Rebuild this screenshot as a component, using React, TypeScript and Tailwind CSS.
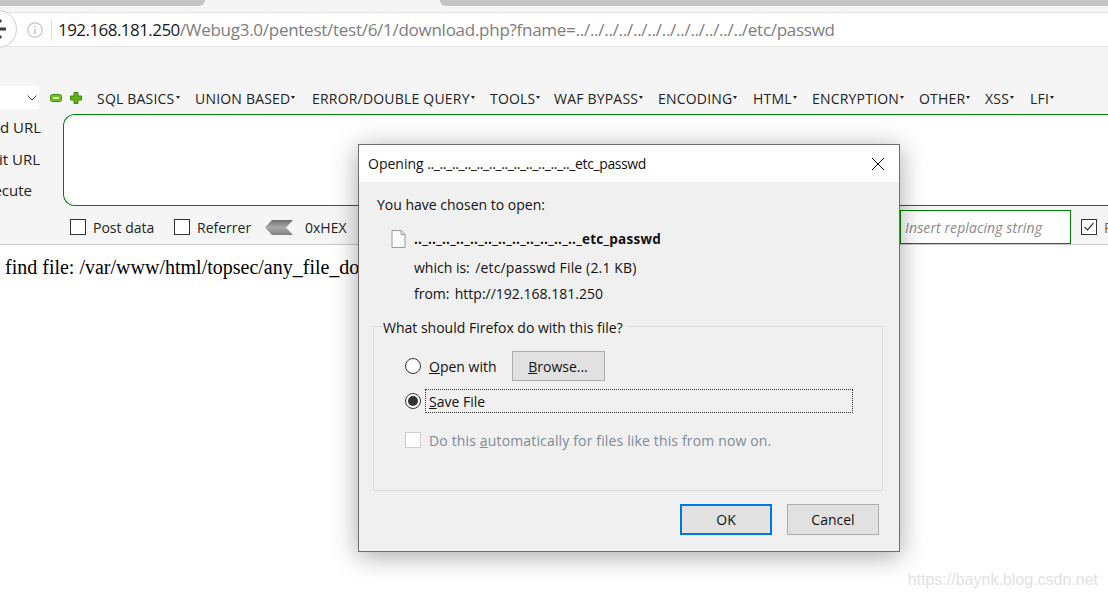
const menuItems = [
  { label: "SQL BASICS", width: "w-[98px]" },
  { label: "UNION BASED", width: "w-[117px]" },
  { label: "ERROR/DOUBLE QUERY", width: "w-[178px]" },
  { label: "TOOLS", width: "w-[64px]" },
  { label: "WAF BYPASS", width: "w-[104px]" },
  { label: "ENCODING", width: "w-[95px]" },
  { label: "HTML", width: "w-[59px]" },
  { label: "ENCRYPTION", width: "w-[107px]" },
  { label: "OTHER", width: "w-[66px]" },
  { label: "XSS", width: "w-[45px]" },
  { label: "LFI", width: "w-[32px]" },
];

function Radio({ checked }: { checked?: boolean }) {
  return (
    <span className="w-4 h-4 rounded-full border border-[#333] bg-white flex items-center justify-center shrink-0">
      {checked && <span className="w-2.5 h-2.5 rounded-full bg-[#333]" />}
    </span>
  );
}

function Check({ label, className }: { label: string; className: string }) {
  return (
    <div className={`flex items-center shrink-0 ${className}`}>
      <span className="w-4 h-4 border border-[#333] bg-white shrink-0" />
      <span className="ml-[7px] text-[14px] text-[#222]">{label}</span>
    </div>
  );
}

function Dialog() {
  return (
    <div className="absolute left-[358px] top-[144px] w-[542px] h-[408px] border border-[#6e6e6e] bg-[#f0f0f0] shadow-[0_4px_24px_rgba(0,0,0,0.35)] flex flex-col text-[14px] text-[#111]">
      <div className="h-[37px] bg-white flex items-center justify-between pl-[9px] pr-[13px] shrink-0">
        <span>
          Opening <span className="tracking-[-0.39px]">.._.._.._.._.._.._.._.._.._.._.._.._etc_passwd</span>
        </span>
        <svg className="w-4 h-4" viewBox="0 0 16 16" fill="none" stroke="#111" strokeWidth="1">
          <path d="M2 2l12 12M14 2L2 14" />
        </svg>
      </div>
      <div className="pl-[18px] pt-[13px] leading-[20px]">You have chosen to open:</div>
      <div className="flex items-center h-[20px] mt-[14px] pl-[32px]">
        <svg className="w-[15px] h-[18px]" viewBox="0 0 15 18" fill="#fbfbfb" stroke="#9a9a9a">
          <path d="M1 .5h9l4 4v13H1z" />
          <path d="M10 .5v4h4" fill="none" />
        </svg>
        <span className="ml-[8px] font-bold text-[13.5px] tracking-[0.25px]">.._.._.._.._.._.._.._.._.._.._.._.._etc_passwd</span>
      </div>
      <div className="pl-[55px] mt-[9px] leading-[20px]">
        which is:&nbsp;<span className="ml-[-2px] tracking-[0.15px]"> /etc/passwd File (2.1 KB)</span>
      </div>
      <div className="pl-[55px] mt-[6px] leading-[20px]">
        from:&nbsp;<span className="ml-[-2px]"> http://192.168.181.250</span>
      </div>
      <fieldset className="mx-[14px] mt-[12px] h-[175px] w-[510px] border border-[#dcdcdc] pl-[9px] shrink-0">
        <legend className="px-0 leading-[20px] pr-1 translate-y-[2px]">What should Firefox do with this file?</legend>
        <div className="flex items-center h-[30px] mt-[15px] pl-[22px]">
          <Radio />
          <span className="ml-2">
            <u>O</u>pen with
          </span>
          <button className="ml-[15px] w-[93px] h-[30px] border border-[#adadad] bg-[#e1e1e1]">
            <u>B</u>rowse...
          </button>
        </div>
        <div className="flex items-center h-[24px] mt-[8px] pl-[22px]">
          <Radio checked />
          <span className="ml-1 w-[428px] h-[24px] pl-[3px] leading-[23px] border border-dotted border-[#333]">
            <u>S</u>ave File
          </span>
        </div>
        <div className="flex items-center h-[16px] mt-[19px] pl-[22px] text-[#7f8a94]">
          <span className="w-4 h-4 border border-[#cfcfcf] bg-white shrink-0" />
          <span className="ml-2 tracking-[0.15px]">
            Do this <u>a</u>utomatically for files like this from now on.
          </span>
        </div>
      </fieldset>
      <div className="flex justify-end gap-[15px] pr-[20px] mt-[13px]">
        <button className="w-[92px] h-[31px] border-2 border-[#0078d7] bg-[#e1e1e1]">OK</button>
        <button className="w-[92px] h-[31px] border border-[#adadad] bg-[#e1e1e1]">Cancel</button>
      </div>
    </div>
  );
}

export default function App() {
  return (
    <div className="relative w-[1108px] h-[596px] overflow-hidden bg-white font-['Open_Sans','Noto_Sans',sans-serif]">
      {/* tab strip */}
      <div className="h-[12px] bg-[#f5f5f5] flex items-start">
        <div className="w-[205px] h-[6px] bg-[#c4c4c4] rounded-br-[8px]" />
        <div className="ml-[235px] flex-1 h-[6px] bg-[#c4c4c4] rounded-bl-[8px]" />
      </div>

      {/* url bar */}
      <div className="h-[35px] bg-white border-y border-[#e4e4e4] flex items-center pl-[27px] text-[17px] whitespace-nowrap">
        <svg className="w-4 h-4 shrink-0" viewBox="0 0 16 16" fill="none" stroke="#c4c4c4" strokeWidth="1.2">
          <circle cx="8" cy="8" r="7.2" />
          <path d="M8 7v5M8 4v1.6" strokeWidth="1.6" />
        </svg>
        <span className="ml-2 w-px h-[22px] bg-[#dcdcdc]" />
        <span className="ml-[6px] tracking-[-0.27px] text-[#7d7d7d]">
          <span className="text-[#1a1a1a] tracking-[-0.55px]">192.168.181.250</span>
          /Webug3.0/pentest/test/6/1/download.php?fname=../../../../../../../../../../../../etc/passwd
        </span>
      </div>

      {/* back button */}
      <div className="absolute left-[-21px] top-[10px] w-[38px] h-[38px] rounded-full bg-white border border-[#cfcfcf] flex items-center justify-end overflow-hidden">
        <svg className="w-[8px] h-[20px] mr-[9px]" viewBox="0 0 8 20" fill="none" stroke="#3c3c3c" strokeWidth="3">
          <path d="M0 2h2.500M0 10h7M0 18h2.500" />
        </svg>
      </div>

      {/* hackbar */}
      <div className="h-[198px] bg-[#f5f5f5] border-b border-[#c8c8c8] text-[14px] text-[#222] flex flex-col">
        <div className="flex items-center h-[23px] mt-[39px] whitespace-nowrap">
          <div className="w-[39px] h-[23px] bg-white flex items-center justify-end pr-[2px]">
            <svg className="w-[10px] h-[6px]" viewBox="0 0 10 6" fill="none" stroke="#555">
              <path d="M.5.5L5 5 9.5.5" />
            </svg>
          </div>
          <svg className="ml-[11px] w-[12px] h-[8px] shrink-0" viewBox="0 0 12 8">
            <rect x=".5" y=".5" width="11" height="7" rx="2" fill="#6fbf1a" stroke="#3f8a10" />
            <rect x="3" y="3" width="6" height="2" fill="#d8f2b0" />
          </svg>
          <svg className="ml-[8px] w-[12px] h-[12px] shrink-0" viewBox="0 0 12 12">
            <path d="M4 .5h4V4h3.500v4H8v3.500H4V8H.5V4H4z" fill="#5fb012" stroke="#3f8a10" strokeLinejoin="round" />
          </svg>
          <div className="ml-[15px] mt-[2px] flex">
            {menuItems.map((item) => (
              <div key={item.label} className={`${item.width} flex items-center tracking-[0.2px]`}>
                <span>{item.label}</span>
                <span className="ml-[1px] mt-[-2px] w-0 h-0 border-x-[2.500px] border-x-transparent border-t-[3px] border-t-[#222]" />
              </div>
            ))}
          </div>
        </div>

        <div className="flex mt-[5px]">
          <div className="w-[41px] h-[92px] flex flex-col justify-between pt-[2px] pb-[5px] overflow-hidden text-[15px]">
            <div className="flex justify-end whitespace-nowrap">Load URL</div>
            <div className="flex justify-end whitespace-nowrap pr-[1px] mt-[1px]">Split URL</div>
            <div className="flex justify-end whitespace-nowrap pr-[9px]">Execute</div>
          </div>
          <div className="ml-[22px] flex-1 h-[92px] bg-white border border-r-0 border-[#008000] rounded-l-[12px]" />
        </div>

        <div className="flex items-center h-[34px] mt-[4px] pl-[70px] whitespace-nowrap">
          <Check label="Post data" className="w-[104px]" />
          <Check label="Referrer" className="w-[91px]" />
          <svg className="w-[28px] h-[15px] shrink-0" viewBox="0 0 28 15">
            <defs>
              <linearGradient id="hexfill" x1="0" y1="0" x2="0" y2="1">
                <stop offset="0" stopColor="#6f6f6f" />
                <stop offset="0.5" stopColor="#a8a8a8" />
                <stop offset="1" stopColor="#808080" />
              </linearGradient>
            </defs>
            <path d="M7 0h21l-7 7.500 7 7.500H7L0 7.500z" fill="url(#hexfill)" />
          </svg>
          <span className="ml-[12px] w-[595px] shrink-0">0xHEX</span>
          <div className="w-[171px] h-[34px] border border-[#008000] bg-white flex items-center justify-end pr-[28px] text-[#8a8a8a] italic text-[14px] tracking-[0.1px] shrink-0">
            Insert replacing string
          </div>
          <span className="ml-[10px] w-4 h-4 border border-[#333] bg-white flex items-center justify-center shrink-0">
            <svg className="w-3 h-3" viewBox="0 0 12 12" fill="none" stroke="#444" strokeWidth="1.200">
              <path d="M1.500 6l3 3 6-7" />
            </svg>
          </span>
          <span className="ml-[7px] text-[#8a5a10]">Replace</span>
        </div>
      </div>

      {/* page body */}
      <div className="pl-[5px] pt-[10px] text-[20px] leading-[24px] text-black whitespace-nowrap font-['Liberation_Serif',serif]">
        find file: /var/www/html/topsec/any_file_download
      </div>

      <Dialog />

      <div className="absolute right-[10px] top-[568px] text-[16px] text-[#e2e2e2] font-['Liberation_Sans',sans-serif]">
        https://baynk.blog.csdn.net
      </div>
    </div>
  );
}
